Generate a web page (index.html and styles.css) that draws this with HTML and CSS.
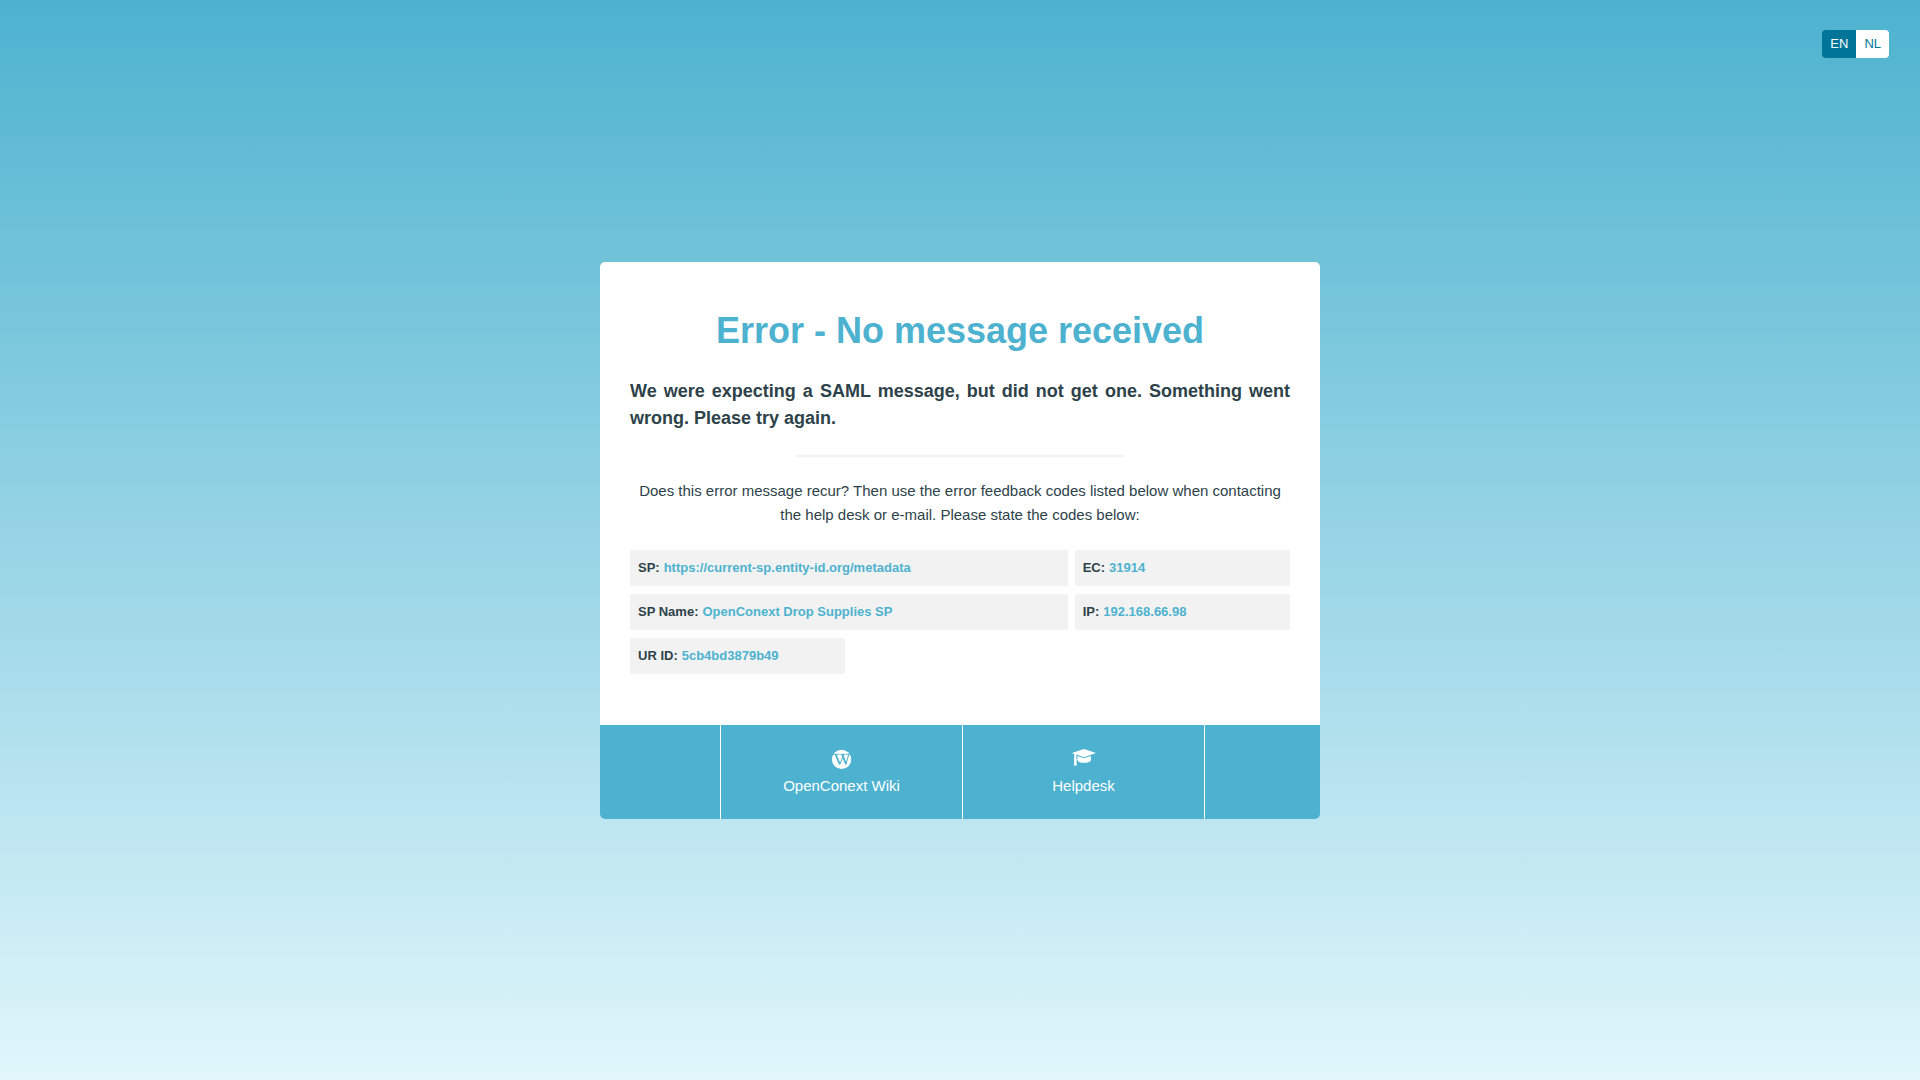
FILE: index.html
```html
<!DOCTYPE html>
<html lang="en">
<head>
  <meta charset="utf-8">
  <meta name="viewport" content="width=device-width, initial-scale=1">
  <title>Error - No message received</title>
  <link rel="stylesheet" href="styles.css">
</head>
<body>
  <nav class="languages" aria-label="Language">
    <button type="button" class="language language-active">EN</button>
    <button type="button" class="language">NL</button>
  </nav>

  <div class="card">
    <main class="content">
      <h1 class="title">Error - No message received</h1>
      <h2 class="message">We were expecting a SAML message, but did not get one. Something went wrong. Please try again.</h2>
      <hr class="rule">
      <p class="help">Does this error message recur? Then use the error feedback codes listed below when contacting the help desk or e-mail. Please state the codes below:</p>
      <dl class="codes">
        <div class="code code-wide"><dt>SP:</dt><dd>https://current-sp.entity-id.org/metadata</dd></div>
        <div class="code"><dt>EC:</dt><dd>31914</dd></div>
        <div class="code code-wide"><dt>SP Name:</dt><dd>OpenConext Drop Supplies SP</dd></div>
        <div class="code"><dt>IP:</dt><dd>192.168.66.98</dd></div>
        <div class="code"><dt>UR ID:</dt><dd>5cb4bd3879b49</dd></div>
      </dl>
    </main>
    <footer class="links">
      <a class="link" href="#wiki">
        <svg class="icon" viewBox="0 0 24 20" aria-hidden="true">
          <circle cx="11.6" cy="10.4" r="9.6" fill="#fff"/>
          <path d="M3.2 5.3H9.4M10.4 5.3H14.8M15.6 5.3H20.2" stroke="#4db2cf" stroke-width="1" fill="none"/>
          <path d="M5.6 5.3L9.7 15M12.2 5.3L16 15" stroke="#4db2cf" stroke-width="1.8" fill="none"/>
          <path d="M9.6 15.6L14 5.8M15.8 15.6L18.8 5.3" stroke="#4db2cf" stroke-width="1" fill="none"/>
        </svg>
        <span>OpenConext Wiki</span>
      </a>
      <a class="link link-last" href="#helpdesk">
        <svg class="icon" viewBox="0 0 24 20" aria-hidden="true" fill="#fff">
          <path d="M12 0L24 4 12 8.2 4.3 5.6V9.8L5 10.7 4.5 11.5 4.8 16.4H1.9L2.2 11.4 1.8 10.6 2.2 9.8V4.9L0 4Z"/>
          <path d="M5.4 7L12 9.2 18.8 6.9 19 11C18 14.8 6.2 14.8 5.4 11Z"/>
        </svg>
        <span>Helpdesk</span>
      </a>
    </footer>
  </div>
</body>
</html>
```
FILE: styles.css
```css
* {
  box-sizing: border-box;
}

body {
  display: flex;
  flex-direction: column;
  align-items: center;
  justify-content: center;
  min-height: 100vh;
  margin: 0;
  color: #2d4249;
  font: 15px/24px "Liberation Sans", Arial, sans-serif;
  background: linear-gradient(#4db2cf, #e0f6fb);
}

.languages {
  position: absolute;
  top: 30px;
  right: 31px;
  display: flex;
  overflow: hidden;
  border-radius: 4px;
}

.language {
  height: 28px;
  padding: 0 8px;
  border: 0;
  color: #007599;
  font: inherit;
  font-size: 13px;
  background: #fff;
  cursor: pointer;
}

.language-active {
  color: #fff;
  background: #007599;
}

.card {
  width: 100%;
  max-width: 720px;
  overflow: hidden;
  border-radius: 5px;
  background: #fff;
}

.content {
  padding: 47px 30px 51px;
}

.title {
  margin: 0 0 25px;
  color: #4db2cf;
  font-size: 36px;
  line-height: 44px;
  text-align: center;
}

.message {
  margin: 0;
  font-size: 18px;
  line-height: 27px;
  text-align: justify;
}

.rule {
  width: 50%;
  height: 2px;
  margin: 23px auto 22px;
  border: 0;
  background: #f2f2f2;
}

.help {
  margin: 0 0 23px;
  text-align: center;
}

.codes {
  display: grid;
  grid-template-columns: repeat(3, 1fr);
  gap: 8px 7px;
  margin: 0;
  font-size: 13px;
  font-weight: bold;
}

.code {
  display: flex;
  gap: 4px;
  padding: 6px 8px;
  border-radius: 2px;
  background: #f2f2f2;
}

.code-wide {
  grid-column: span 2;
}

.code dd {
  margin: 0;
  color: #4db2cf;
}

.links {
  display: grid;
  grid-template-columns: 242px 243px;
  padding-left: 120px;
  background: #4db2cf;
}

.link {
  display: flex;
  flex-direction: column;
  align-items: center;
  gap: 5px;
  padding: 24px 0 21px;
  border-left: 1px solid #fff;
  color: #fff;
  text-decoration: none;
}

.link-last {
  border-right: 1px solid #fff;
}

.icon {
  width: 24px;
  height: 20px;
}
```
